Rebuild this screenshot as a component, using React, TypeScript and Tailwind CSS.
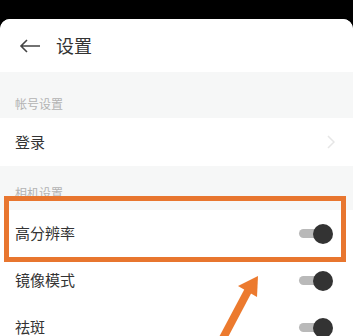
import React from "react";

const font = { fontFamily: '"Noto Sans CJK SC", "Noto Sans", sans-serif' };

function Toggle() {
  return (
    <div className="relative w-[34px] h-[20px] flex items-center">
      <div className="w-[26px] h-[9px] rounded-full bg-[#b9b9b9]" />
      <div className="absolute right-0 top-0 w-[20px] h-[20px] rounded-full bg-[#333333]" />
    </div>
  );
}

function SwitchRow({ label }: { label: string }) {
  return (
    <div className="h-[47px] flex items-center justify-between pl-[15px] pr-[20px] bg-white">
      <span className="text-[15px] text-[#333]">{label}</span>
      <Toggle />
    </div>
  );
}

export default function App() {
  return (
    <div className="relative w-[353px] h-[336px] bg-black pt-[19px] overflow-hidden" style={font}>
      <div className="bg-[#f6f7f7] rounded-t-[10px] h-full overflow-hidden">
        {/* Header */}
        <div className="h-[53px] bg-white flex items-center pl-[19px]">
          <svg width="22" height="14" viewBox="0 0 22 14" fill="none" stroke="#444" strokeWidth="1.6">
            <path d="M21 7H2M8 1L2 7l6 6" />
          </svg>
          <span className="ml-[15px] text-[18px] text-[#333]">设置</span>
        </div>

        {/* 帐号设置 */}
        <div className="h-[46px] flex items-end pl-[15px] pb-[5px]">
          <span className="text-[12px] text-[#b3b3b3]">帐号设置</span>
        </div>
        <div className="h-[48px] bg-white flex items-center justify-between pl-[15px] pr-[18px]">
          <span className="text-[15px] text-[#333]">登录</span>
          <svg width="8" height="14" viewBox="0 0 8 14" fill="none" stroke="#e6e6e6" strokeWidth="1.5">
            <path d="M1 1l6 6-6 6" />
          </svg>
        </div>

        {/* 相机设置 */}
        <div className="h-[44px] flex items-start pl-[15px] pt-[18px]">
          <span className="text-[12px] text-[#b3b3b3]">相机设置</span>
        </div>
        <SwitchRow label="高分辨率" />
        <SwitchRow label="镜像模式" />
        <SwitchRow label="祛斑" />
      </div>

      {/* annotation box */}
      <div className="absolute left-[4px] top-[196px] w-[342px] h-[66px] border-[5px] border-[#e8762f]" />

      {/* annotation arrow */}
      <svg className="absolute left-0 top-0" width="353" height="336" viewBox="0 0 353 336">
        <path d="M222 340L249 289" stroke="#ec7a2e" strokeWidth="8" />
        <path d="M258 276L238 286L257 297Z" fill="#ec7a2e" />
      </svg>
    </div>
  );
}
